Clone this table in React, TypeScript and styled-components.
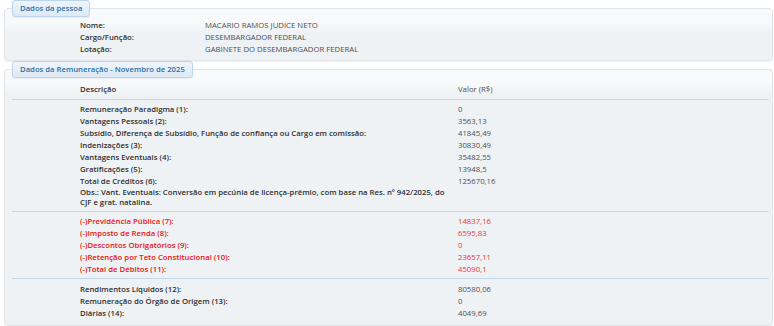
import styled, { createGlobalStyle } from 'styled-components';

const GlobalStyle = createGlobalStyle`
  html, body {
    margin: 0;
    padding: 0;
    background: #ffffff;
  }
  body {
    font-family: "Open Sans", "DejaVu Sans", sans-serif;
    font-size: 7.75px;
    color: #333333;
  }
`;

type Line = { label: string; value: string; debit?: boolean };

const person: Line[] = [
  { label: 'Nome:', value: 'MACARIO RAMOS JUDICE NETO' },
  { label: 'Cargo/Função:', value: 'DESEMBARGADOR FEDERAL' },
  { label: 'Lotação:', value: 'GABINETE DO DESEMBARGADOR FEDERAL' },
];

const credits: Line[] = [
  { label: 'Remuneração Paradigma (1):', value: '0' },
  { label: 'Vantagens Pessoais (2):', value: '3563,13' },
  { label: 'Subsídio, Diferença de Subsídio, Função de confiança ou Cargo em comissão:', value: '41845,49' },
  { label: 'Indenizações (3):', value: '30830,49' },
  { label: 'Vantagens Eventuais (4):', value: '35482,55' },
  { label: 'Gratificações (5):', value: '13948,5' },
  { label: 'Total de Créditos (6):', value: '125670,16' },
];

const debits: Line[] = [
  { label: '(-)Previdência Pública (7):', value: '14837,16', debit: true },
  { label: '(-)Imposto de Renda (8):', value: '6595,83', debit: true },
  { label: '(-)Descontos Obrigatórios (9):', value: '0', debit: true },
  { label: '(-)Retenção por Teto Constitucional (10):', value: '23657,11', debit: true },
  { label: '(-)Total de Débitos (11):', value: '45090,1', debit: true },
];

const others: Line[] = [
  { label: 'Rendimentos Líquidos (12):', value: '80580,06' },
  { label: 'Remuneração do Órgão de Origem (13):', value: '0' },
  { label: 'Diárias (14):', value: '4049,69' },
];

const COLS = '68px 378px 1fr';

export default function App(): JSX.Element {
  return (
    <Page>
      <GlobalStyle />
      <Panel>
        <Legend>Dados da pessoa</Legend>
        <PersonBlock>
          {person.map((p) => (
            <Row key={p.label} $cols="68px 125px 1fr">
              <span />
              <Label>{p.label}</Label>
              <Value>{p.value}</Value>
            </Row>
          ))}
        </PersonBlock>
      </Panel>

      <Panel>
        <Legend>Dados da Remuneração - Novembro de 2025</Legend>
        <Head>
          <Row $cols={COLS}>
            <span />
            <Label>Descrição</Label>
            <Value>Valor (R$)</Value>
          </Row>
        </Head>
        <Section>
          {credits.map((c) => (
            <Row key={c.label} $cols={COLS}>
              <span />
              <Label>{c.label}</Label>
              <Value>{c.value}</Value>
            </Row>
          ))}
          <Row $cols={COLS}>
            <span />
            <Note>
              Obs.: Vant. Eventuais: Conversão em pecúnia de licença-prêmio, com base na Res. nº 942/2025, do
              CJF e grat. natalina.
            </Note>
            <span />
          </Row>
        </Section>
        <Section>
          {debits.map((d) => (
            <Row key={d.label} $cols={COLS}>
              <span />
              <Label $debit>{d.label}</Label>
              <Value $debit>{d.value}</Value>
            </Row>
          ))}
        </Section>
        <Section $last>
          {others.map((o) => (
            <Row key={o.label} $cols={COLS}>
              <span />
              <Label>{o.label}</Label>
              <Value>{o.value}</Value>
            </Row>
          ))}
        </Section>
      </Panel>
    </Page>
  );
}

const Page = styled.div`
  padding: 0 1px 0 4px;
`;

const Panel = styled.fieldset`
  margin: 0;
  padding: 0 3px 0 7px;
  border: 1px solid #e1e5e9;
  border-radius: 4px;
  background: linear-gradient(to bottom, #f9fafb 0, #f7f9fa 14px, #eff2f5 24px, #eff2f5 100%);
  box-shadow: 0 1px 1px rgba(0, 0, 0, 0.06);
  min-width: 0;
`;

const Legend = styled.legend`
  margin: 0;
  padding: 0 7px;
  height: 15px;
  line-height: 15px;
  border: 1px solid #bcd5ec;
  border-radius: 3px;
  background: linear-gradient(to bottom, #eef5fc, #dde9f5);
  color: #2f6ea5;
  font-weight: 600;
  font-size: 7.7px;
  box-shadow: 0 1px 1px rgba(0, 0, 0, 0.05);
`;

const PersonBlock = styled.div`
  padding: 2px 0 5px;
`;

const Head = styled.div`
  padding: 5px 0 4px;
  border-bottom: 1.5px solid #c3d7ea;
`;

const Section = styled.div<{ $last?: boolean }>`
  padding: ${(p) => (p.$last ? '4px 0 6px' : '3px 0 3px')};
  border-bottom: ${(p) => (p.$last ? 'none' : '1.5px solid #c3d7ea')};
`;

const Row = styled.div<{ $cols: string }>`
  display: grid;
  grid-template-columns: ${(p) => p.$cols};
  align-items: start;
`;

const Label = styled.span<{ $debit?: boolean }>`
  padding: 1px 8px 1px 0;
  line-height: 10px;
  font-weight: 600;
  color: ${(p) => (p.$debit ? '#ee1111' : '#2e2e2e')};
`;

const Value = styled.span<{ $debit?: boolean }>`
  padding: 1px 0;
  line-height: 10px;
  color: ${(p) => (p.$debit ? '#f03333' : '#505050')};
`;

const Note = styled.span`
  padding: 1px 8px 1px 0;
  line-height: 9.5px;
  font-weight: 600;
  color: #2e2e2e;
`;
